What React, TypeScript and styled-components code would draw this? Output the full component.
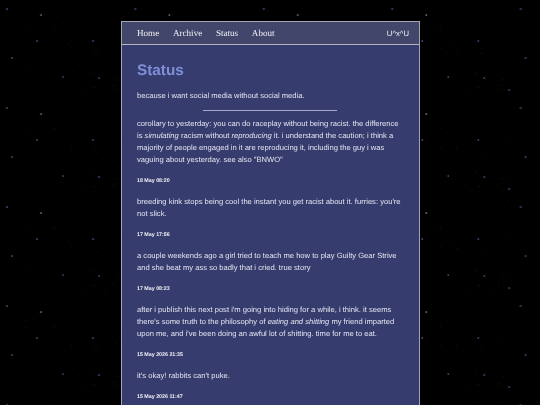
import React from 'react';
import styled, { createGlobalStyle } from 'styled-components';

const Global = createGlobalStyle`
  html, body { margin: 0; padding: 0; background: #000; height: 100%; overflow: hidden; }
  body { text-rendering: geometricPrecision; }
`;

const Stars = styled.svg`
  position: fixed;
  inset: 0;
  width: 540px;
  height: 405px;
`;

const Page = styled.div`
  position: relative;
  display: flex;
  justify-content: center;
  padding-top: 21px;
  height: 405px;
  box-sizing: border-box;
  overflow: hidden;
`;

const Panel = styled.main`
  width: 299px;
  box-sizing: border-box;
  border: 1.5px solid #a3a5b3;
  border-bottom: none;
  background: #373c6e;
  flex: none;
  filter: blur(0.25px);
`;

const Nav = styled.nav`
  display: flex;
  align-items: center;
  height: 23px;
  box-sizing: border-box;
  padding: 2px 9.5px 0 15.5px;
  background: #41466a;
  border-bottom: 1.2px solid #b4b6c2;
`;

const NavLink = styled.a`
  font: 9.1px/1 "Liberation Serif", serif;
  color: #f0f1f5;
  margin-right: 13.7px;
`;

const Handle = styled.span`
  margin-left: auto;
  font: 7.7px/1 "Liberation Sans", sans-serif;
  color: #f0f1f5;
`;

const Content = styled.div`
  padding: 14.6px 15px 0 15.5px;
  font: 7.6px/12px "Liberation Sans", sans-serif;
  color: #e2e4f0;
`;

const Title = styled.h1`
  margin: 0 0 8.4px;
  font: bold 15.3px/22px "Liberation Sans", sans-serif;
  color: #7f90d8;
`;

const Intro = styled.p`
  margin: 0;
`;

const Rule = styled.hr`
  width: 134px;
  height: 1px;
  margin: 8px auto 7px;
  border: none;
  background: #a6a9c6;
`;

const Post = styled.article`
  margin-bottom: 11px;
`;

const Body = styled.p`
  margin: 0 0 11px;
`;

const Stamp = styled.time`
  display: block;
  font: bold 5.3px/8px "Liberation Sans", sans-serif;
  color: #f0f1f5;
`;

const TILE_W = 128.4;
const TILE_H = 99;

const bright: [number, number, string][] = [
  [7, 9, '#a8c4ff'], [37, 41, '#a8c4ff'], [93, 41, '#a8c4ff'], [12, 58, '#a8c4ff'],
  [63, 77, '#8fb0f0'], [99, 78, '#a8c4ff'], [124, 90, '#a8c4ff'],
];

let seed = 7;
const rnd = () => {
  seed = (seed * 16807) % 2147483647;
  return seed / 2147483647;
};
const faint = Array.from({ length: 75 }, () => ({
  x: rnd() * TILE_W,
  y: rnd() * TILE_H,
  o: 0.08 + rnd() * 0.2,
  c: ['#6f86d0', '#b08080', '#8f98c0', '#a0a0a0'][Math.floor(rnd() * 4)],
}));

const posts: { body: React.ReactNode; stamp: string }[] = [
  {
    body: <>corollary to yesterday: you can do raceplay without being racist. the difference is <em>simulating</em> racism without <em>reproducing</em> it. i understand the caution; i think a majority of people engaged in it are reproducing it, including the guy i was vaguing about yesterday. see also "BNWO"</>,
    stamp: '18 May 08:20',
  },
  {
    body: <>breeding kink stops being cool the instant you get racist about it. furries: you're not slick.</>,
    stamp: '17 May 17:56',
  },
  {
    body: <>a couple weekends ago a girl tried to teach me how to play Guilty Gear Strive and she beat my ass so badly that i cried. true story</>,
    stamp: '17 May 08:23',
  },
  {
    body: <>after i publish this next post i'm going into hiding for a while, i think. it seems there's some truth to the philosophy of <em>eating and shitting</em> my friend imparted upon me, and i've been doing an awful lot of shitting. time for me to eat.</>,
    stamp: '15 May 2026 21:35',
  },
  {
    body: <>it's okay! rabbits can't puke.</>,
    stamp: '15 May 2026 11:47',
  },
];

export default function App() {
  return (
    <>
      <Global />
      <Stars viewBox="0 0 540 405" aria-hidden="true">
        <defs>
          <pattern id="sky" width={TILE_W} height={TILE_H} patternUnits="userSpaceOnUse">
            {faint.map((s, i) => (
              <circle key={i} cx={s.x} cy={s.y} r={0.45} fill={s.c} opacity={s.o} />
            ))}
            <circle cx={41} cy={15} r={1.1} fill="#7c7c60" opacity={0.4} />
            <circle cx={41} cy={15} r={0.5} fill="#e0e0c8" />
            {bright.map(([x, y, c], i) => (
              <g key={i}>
                <circle cx={x} cy={y} r={1.1} fill="#4a68c8" opacity={0.35} />
                <circle cx={x} cy={y} r={0.45} fill={c} />
              </g>
            ))}
          </pattern>
        </defs>
        <rect width="540" height="405" fill="url(#sky)" />
      </Stars>
      <Page>
        <Panel>
          <Nav>
            <NavLink>Home</NavLink>
            <NavLink>Archive</NavLink>
            <NavLink>Status</NavLink>
            <NavLink>About</NavLink>
            <Handle>U^x^U</Handle>
          </Nav>
          <Content>
            <Title>Status</Title>
            <Intro>because i want social media without social media.</Intro>
            <Rule />
            {posts.map((p) => (
              <Post key={p.stamp}>
                <Body>{p.body}</Body>
                <Stamp>{p.stamp}</Stamp>
              </Post>
            ))}
          </Content>
        </Panel>
      </Page>
    </>
  );
}
